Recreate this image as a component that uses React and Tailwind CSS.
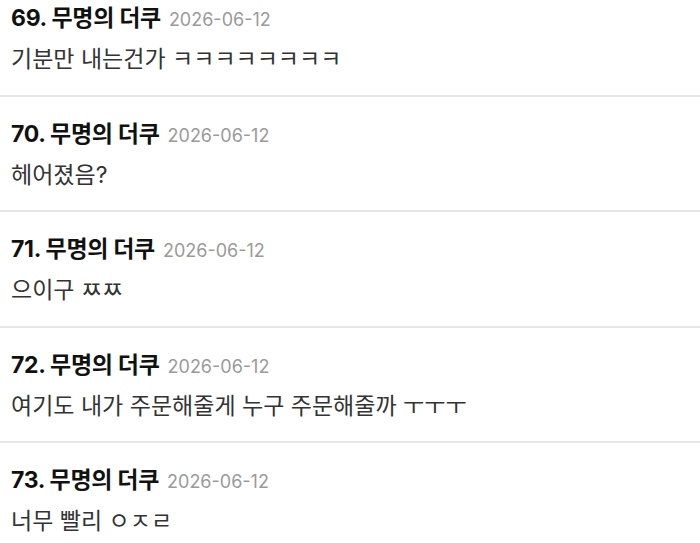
const comments = [
  { no: 69, name: "무명의 더쿠", date: "2026-06-12", text: "기분만 내는건가 ㅋㅋㅋㅋㅋㅋㅋㅋ" },
  { no: 70, name: "무명의 더쿠", date: "2026-06-12", text: "헤어졌음?" },
  { no: 71, name: "무명의 더쿠", date: "2026-06-12", text: "으이구 ㅉㅉ" },
  { no: 72, name: "무명의 더쿠", date: "2026-06-12", text: "여기도 내가 주문해줄게 누구 주문해줄까 ㅜㅜㅜ" },
  { no: 73, name: "무명의 더쿠", date: "2026-06-12", text: "너무 빨리 ㅇㅈㄹ" },
];

const Comment = ({ no, name, date, text }) => (
  <div className="h-[115.5px] border-b-2 border-[#e6e6e6] px-[11px] pt-[22px]">
    <div className="flex items-baseline gap-[8px] leading-[30px]">
      <span className="text-[23px] font-bold tracking-[-0.3px] text-[#111]">{no}. {name}</span>
      <span className="text-[18px] text-[#9a9a9a]">{date}</span>
    </div>
    <p className="mt-[9px] text-[23px] leading-[30px] text-[#333]">{text}</p>
  </div>
);

export default function App() {
  return (
    <div
      className="h-[543px] w-[700px] overflow-hidden bg-white"
      style={{ fontFamily: "Inter, 'Noto Sans CJK KR', sans-serif" }}
    >
      <div className="-mt-[19px]">
        {comments.map((c) => (
          <Comment key={c.no} {...c} />
        ))}
      </div>
    </div>
  );
}
